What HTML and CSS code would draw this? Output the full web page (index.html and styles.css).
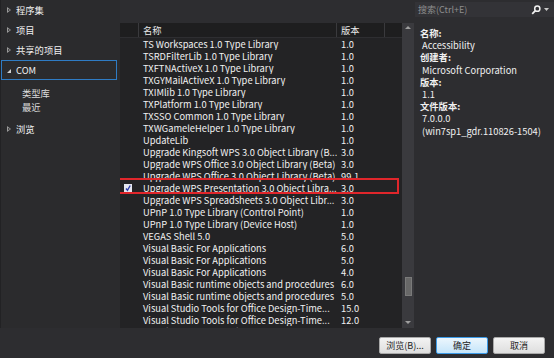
FILE: index.html
```html
<!DOCTYPE html>
<html lang="zh-CN">
<head>
  <meta charset="UTF-8">
  <title>引用管理器</title>
  <link rel="stylesheet" href="styles.css">
</head>
<body>
  <div class="dialog">
    <div class="main">
      <!-- Left navigation -->
      <nav class="nav">
        <div class="nav-item"><span class="tri"></span>程序集</div>
        <div class="nav-item"><span class="tri"></span>项目</div>
        <div class="nav-item"><span class="tri"></span>共享的项目</div>
        <div class="nav-item active"><span class="tri open"></span>COM</div>
        <div class="nav-sub first">类型库</div>
        <div class="nav-sub">最近</div>
        <div class="nav-item browse"><span class="tri"></span>浏览</div>
      </nav>

      <!-- Library list -->
      <section class="center">
        <div class="strip"></div>
        <div class="list-wrap">
          <div class="list">
            <div class="head">
              <span></span>
              <span class="col-name">名称</span>
              <span class="col-ver">版本</span>
              <span></span>
            </div>
            <div class="rows">
              <div class="row"><span></span><span class="name">TS Workspaces 1.0 Type Library</span><span class="ver">1.0</span></div>
              <div class="row"><span></span><span class="name">TSRDFilterLib 1.0 Type Library</span><span class="ver">1.0</span></div>
              <div class="row"><span></span><span class="name">TXFTNActiveX 1.0 Type Library</span><span class="ver">1.0</span></div>
              <div class="row"><span></span><span class="name">TXGYMailActiveX 1.0 Type Library</span><span class="ver">1.0</span></div>
              <div class="row"><span></span><span class="name">TXIMlib 1.0 Type Library</span><span class="ver">1.0</span></div>
              <div class="row"><span></span><span class="name">TXPlatform 1.0 Type Library</span><span class="ver">1.0</span></div>
              <div class="row"><span></span><span class="name">TXSSO Common 1.0 Type Library</span><span class="ver">1.0</span></div>
              <div class="row"><span></span><span class="name">TXWGameleHelper 1.0 Type Library</span><span class="ver">1.0</span></div>
              <div class="row"><span></span><span class="name">UpdateLib</span><span class="ver">1.0</span></div>
              <div class="row"><span></span><span class="name">Upgrade Kingsoft WPS 3.0 Object Library (B...</span><span class="ver">3.0</span></div>
              <div class="row"><span></span><span class="name">Upgrade WPS Office 3.0 Object Library (Beta)</span><span class="ver">3.0</span></div>
              <div class="row"><span></span><span class="name">Upgrade WPS Office 3.0 Object Library (Beta)</span><span class="ver">99.1</span></div>
              <div class="row marked">
                <span class="check-cell">
                  <span class="checkbox">
                    <svg width="8" height="8" viewBox="0 0 8 8"><path d="M2 4.5 L3.5 6.3 L6.2 1.5" fill="none" stroke="#2b3aa8" stroke-width="1.4"/></svg>
                  </span>
                </span>
                <span class="name">Upgrade WPS Presentation 3.0 Object Libra...</span><span class="ver">3.0</span>
              </div>
              <div class="row"><span></span><span class="name">Upgrade WPS Spreadsheets 3.0 Object Libr...</span><span class="ver">3.0</span></div>
              <div class="row"><span></span><span class="name">UPnP 1.0 Type Library (Control Point)</span><span class="ver">1.0</span></div>
              <div class="row"><span></span><span class="name">UPnP 1.0 Type Library (Device Host)</span><span class="ver">1.0</span></div>
              <div class="row"><span></span><span class="name">VEGAS Shell 5.0</span><span class="ver">5.0</span></div>
              <div class="row"><span></span><span class="name">Visual Basic For Applications</span><span class="ver">6.0</span></div>
              <div class="row"><span></span><span class="name">Visual Basic For Applications</span><span class="ver">5.0</span></div>
              <div class="row"><span></span><span class="name">Visual Basic For Applications</span><span class="ver">4.0</span></div>
              <div class="row"><span></span><span class="name">Visual Basic runtime objects and procedures</span><span class="ver">6.0</span></div>
              <div class="row"><span></span><span class="name">Visual Basic runtime objects and procedures</span><span class="ver">5.0</span></div>
              <div class="row"><span></span><span class="name">Visual Studio Tools for Office Design-Time...</span><span class="ver">15.0</span></div>
              <div class="row"><span></span><span class="name">Visual Studio Tools for Office Design-Time...</span><span class="ver">12.0</span></div>
              <div class="row"><span></span><span class="name">VsWebSite 1.0 Type Library</span><span class="ver">1.0</span></div>
            </div>
          </div>
          <div class="scroll">
            <span class="arrow up"></span>
            <div class="track"><div class="thumb"></div></div>
            <span class="arrow down"></span>
          </div>
        </div>
      </section>

      <!-- Search and details -->
      <aside class="side">
        <div class="search">
          <span class="search-text">搜索(Ctrl+E)</span>
          <svg class="search-icon" width="10" height="10" viewBox="0 0 10 10">
            <circle cx="6.3" cy="3.7" r="2.6" fill="none" stroke="#f1f1f1" stroke-width="1.5"/>
            <path d="M4.4 5.6 L1.2 8.8" stroke="#f1f1f1" stroke-width="1.8"/>
          </svg>
          <svg class="search-drop" width="5" height="3" viewBox="0 0 5 3"><path d="M0 0 H5 L2.5 3 Z" fill="#c8c8c8"/></svg>
        </div>
        <div class="details">
          <div class="label">名称:</div>
          <div class="value">Accessibility</div>
          <div class="label">创建者:</div>
          <div class="value">Microsoft Corporation</div>
          <div class="label">版本:</div>
          <div class="value">1.1</div>
          <div class="label">文件版本:</div>
          <div class="value">7.0.0.0</div>
          <div class="value">(win7sp1_gdr.110826-1504)</div>
        </div>
      </aside>
    </div>

    <div class="footer">
      <button class="btn">浏览(B)...</button>
      <button class="btn primary">确定</button>
      <button class="btn">取消</button>
    </div>
  </div>
</body>
</html>
```

FILE: styles.css
```css
/* Global */
body {
  margin: 0;
  background: #2d2d30;
  color: #f1f1f1;
  font-family: "Noto Sans CJK SC", "Noto Sans", sans-serif;
  font-size: 9.3px;
}

.dialog {
  width: 554px;
  height: 358px;
  overflow: hidden;
}

.main {
  display: flex;
  height: 328px;
}

/* Left navigation */
.nav {
  width: 120px;
  flex-shrink: 0;
  background: #2b2b2d;
  border-left: 1px solid #222224;
  box-sizing: border-box;
}

.nav-item {
  height: 20px;
  display: flex;
  align-items: center;
  padding-left: 6px;
  box-sizing: border-box;
}

.nav-item.active {
  margin-right: 3px;
  border: 1px solid #2f7cc4;
  padding-left: 5px;
}

.nav-sub {
  padding-left: 21px;
  line-height: 14px;
  color: #dcdcdc;
}

.nav-sub.first {
  margin-top: 6px;
}

.nav-item.browse {
  margin-top: 5px;
}

.tri {
  width: 0;
  height: 0;
  margin-right: 5px;
  border-top: 3px solid transparent;
  border-bottom: 3px solid transparent;
  border-left: 4px solid #9a9a9a;
  position: relative;
}

.tri::after {
  content: "";
  position: absolute;
  left: -3px;
  top: -1.5px;
  border-top: 1.5px solid transparent;
  border-bottom: 1.5px solid transparent;
  border-left: 2px solid #2b2b2d;
}

.tri.open {
  border: 0;
  border-bottom: 4px solid #d0d0d0;
  border-left: 4px solid transparent;
  margin-top: 2px;
}

.tri.open::after {
  display: none;
}

/* Center list */
.center {
  width: 294px;
  flex-shrink: 0;
  display: flex;
  flex-direction: column;
}

.strip {
  height: 23px;
  background: #2d2d30;
}

.list-wrap {
  flex: 1;
  display: flex;
  min-height: 0;
}

.list {
  width: 282px;
  background: #232325;
  overflow: hidden;
}

.head,
.row {
  display: grid;
  grid-template-columns: 19px 198px 48px 17px;
}

.head {
  height: 14px;
  line-height: 14px;
  background: #1e1e1f;
  border-bottom: 1px solid #2e2e31;
  color: #e8e8e8;
}

.head span {
  border-right: 1px solid #3a3a3d;
}

.head span:last-child {
  border-right: 0;
}

.col-name,
.col-ver {
  padding-left: 4px;
}

.row {
  height: 12px;
  line-height: 12px;
  white-space: nowrap;
}

.row span {
  min-width: 0;
}

.name,
.ver {
  padding-left: 4px;
  overflow: hidden;
}

.row.marked {
  position: relative;
}

.row.marked::after {
  content: "";
  position: absolute;
  left: -3px;
  right: 3px;
  top: -4px;
  bottom: 0;
  border: 2px solid #e0262b;
}

.check-cell {
  display: flex;
  align-items: center;
  padding-left: 4px;
}

.checkbox {
  width: 8px;
  height: 8px;
  background: #e4e6f0;
  display: flex;
}

/* Scrollbar */
.scroll {
  width: 12px;
  background: #3a3a3e;
  display: flex;
  flex-direction: column;
  align-items: center;
}

.arrow {
  width: 0;
  height: 0;
  border-left: 3px solid transparent;
  border-right: 3px solid transparent;
}

.arrow.up {
  margin-top: 3px;
  border-bottom: 3px solid #9e9e9e;
}

.arrow.down {
  margin-bottom: 4px;
  border-top: 3px solid #9e9e9e;
}

.track {
  flex: 1;
}

.thumb {
  width: 7px;
  height: 19px;
  margin-top: 248px;
  background: #686868;
  border: 1px solid #7a7a7a;
  box-sizing: border-box;
}

/* Right side */
.side {
  flex: 1;
  padding-left: 1px;
}

.search {
  margin-top: 2px;
  height: 15px;
  background: #333337;
  display: flex;
  align-items: center;
  padding-left: 3px;
  padding-right: 5px;
}

.search-text {
  flex: 1;
  color: #8e8e8e;
  font-size: 9px;
}

.search-icon {
  margin-right: 3px;
}

.details {
  padding: 10px 0 0 5px;
  line-height: 12.2px;
}

.label {
  font-weight: bold;
}

.value {
  padding-left: 2px;
}

/* Footer buttons */
.footer {
  height: 30px;
  background: #2d2d30;
  display: flex;
  justify-content: flex-end;
  gap: 5px;
  padding: 9px 9px 0 0;
  box-sizing: border-box;
}

.btn {
  width: 52px;
  height: 17px;
  padding: 0;
  font-family: inherit;
  font-size: 9px;
  color: #1e1e1e;
  background: linear-gradient(#f3f3f3, #dedede);
  border: 1px solid #a9a9a9;
  border-radius: 2px;
}

.btn.primary {
  background: linear-gradient(#ecf6fd, #c5e5fa);
  border-color: #3c9be8;
}
```
